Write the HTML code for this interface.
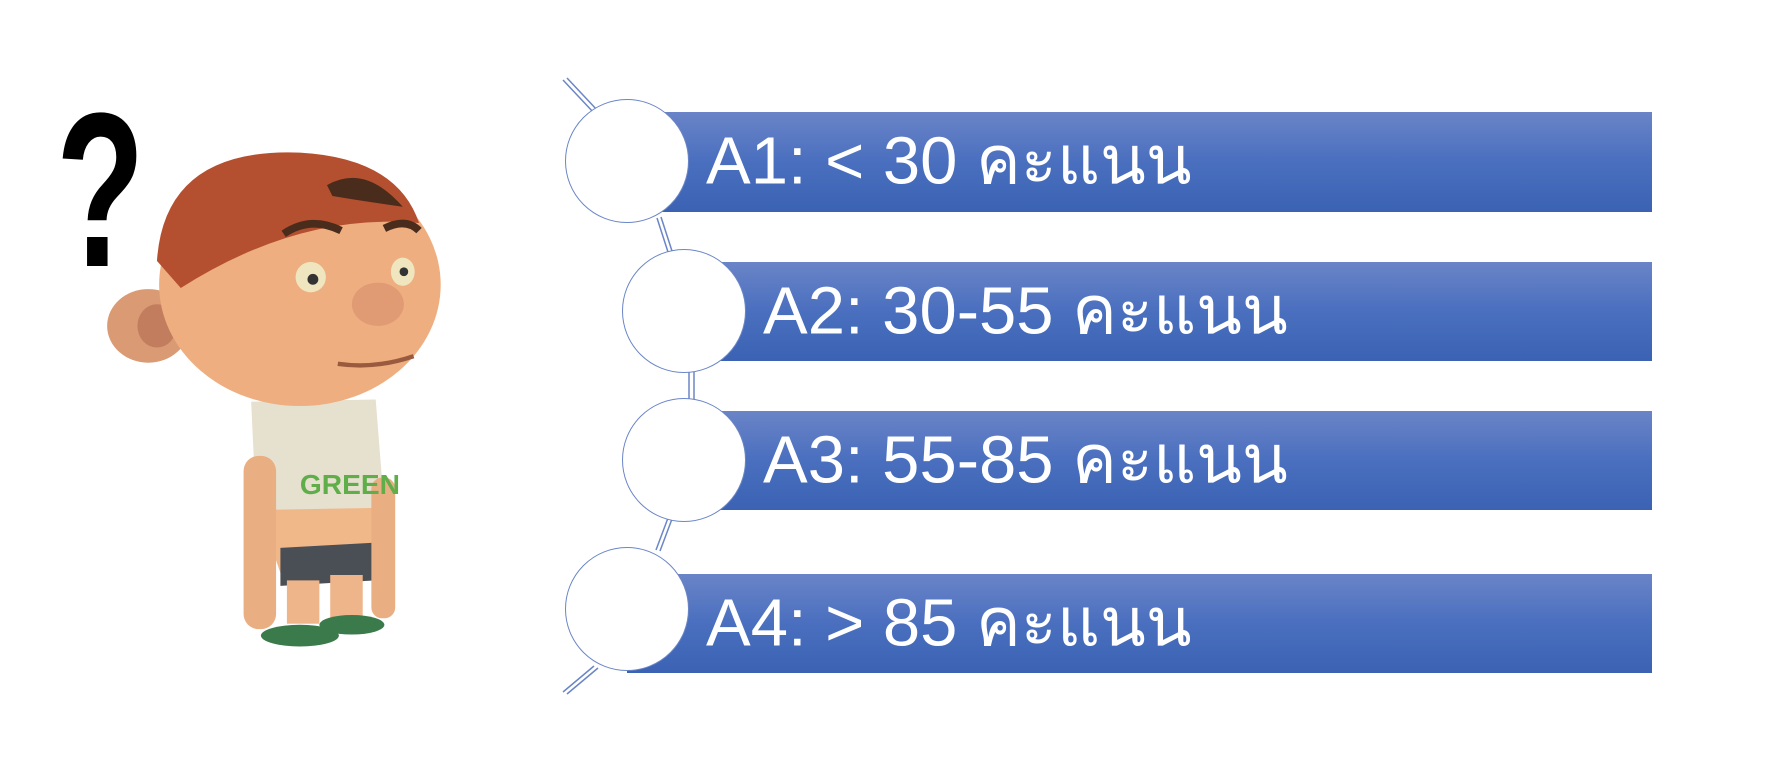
<!DOCTYPE html>
<html><head><meta charset="utf-8"><style>
html,body{margin:0;padding:0;background:#fff;width:1780px;height:762px;overflow:hidden;position:relative;font-family:"Liberation Sans","DejaVu Sans",sans-serif}
.bar{position:absolute;background:linear-gradient(#6a84c7,#4a6fbf 50%,#3b62b3);color:#fff;}
.bar span{position:absolute;top:50%;transform:translateY(-52%);font-size:67px;white-space:nowrap;font-weight:300}
.c{position:absolute;width:124px;height:124px;border-radius:50%;background:#fff;border:1.5px solid #6b86c7;box-sizing:border-box}
</style></head><body>
<svg width="1780" height="762" style="position:absolute;left:0;top:0">
<g stroke="#6b86c7" stroke-width="1.5" fill="none">
<path d="M563 80 L594 113 M567 78 L598 111"/>
<path d="M657 218 L668 252 M661 217 L672 251"/>
<path d="M689 372 L689 400 M694 372 L694 400"/>
<path d="M668 518 L656 550 M672 519 L660 551"/>
<path d="M594 666 L563 692 M598 668 L567 694"/>
</g>
<g transform="translate(-25,1) scale(1.083)">
<ellipse cx="160" cy="300" rx="38" ry="34" fill="#d99a74"/>
<ellipse cx="168" cy="300" rx="18" ry="20" fill="#c27d5f"/>
<path d="M255 370 L370 368 L378 470 L260 478 Z" fill="#e6e0cf"/>
<path d="M262 470 L372 468 L370 528 L282 528 Z" fill="#f0b788"/>
<path d="M282 505 L372 500 L370 535 L282 540 Z" fill="#4a4e55"/>
<rect x="248" y="420" width="30" height="160" rx="14" fill="#e9ae82"/>
<rect x="366" y="440" width="22" height="130" rx="10" fill="#e9ae82"/>
<rect x="288" y="535" width="30" height="40" fill="#eeb58a"/>
<rect x="328" y="530" width="30" height="40" fill="#eeb58a"/>
<ellipse cx="300" cy="586" rx="36" ry="10" fill="#3b7a4a"/>
<ellipse cx="348" cy="576" rx="30" ry="9" fill="#3b7a4a"/>
<text x="300" y="455" font-size="26" font-weight="bold" fill="#5fae4a" font-family="Liberation Sans">GREEN</text>
<ellipse cx="300" cy="262" rx="130" ry="112" fill="#eeae80"/>
<path d="M168 240 Q175 135 300 140 Q390 145 410 205 Q300 195 190 265 Z" fill="#b4502f"/>
<path d="M325 170 Q360 150 395 190 Q360 185 330 180 Z" fill="#4a2c1c"/>
<ellipse cx="310" cy="255" rx="14" ry="14" fill="#efe6c0"/>
<ellipse cx="395" cy="250" rx="11" ry="13" fill="#efe6c0"/>
<circle cx="312" cy="257" r="5" fill="#333"/><circle cx="396" cy="250" r="4" fill="#333"/>
<path d="M285 215 Q310 198 338 212 M378 210 Q398 200 410 212" stroke="#4a2c1c" stroke-width="7" fill="none"/>
<ellipse cx="372" cy="280" rx="24" ry="20" fill="#e09a74"/>
<path d="M335 335 Q370 340 405 328" stroke="#9a5a3e" stroke-width="4" fill="none"/>
</g>
</svg>
<div style="position:absolute;left:56px;top:80px;font-size:220px;font-weight:bold;line-height:1;color:#000;transform:scaleX(0.66);transform-origin:left top">?</div>
<div class="bar" style="left:660px;top:112px;width:992px;height:100px"><span style="left:46px">A1: &lt; 30 คะแนน</span></div>
<div class="bar" style="left:715px;top:262px;width:937px;height:99px"><span style="left:48px">A2: 30-55 คะแนน</span></div>
<div class="bar" style="left:715px;top:411px;width:937px;height:99px"><span style="left:48px">A3: 55-85 คะแนน</span></div>
<div class="bar" style="left:627px;top:574px;width:1025px;height:99px"><span style="left:79px">A4: &gt; 85 คะแนน</span></div>
<div class="c" style="left:565px;top:99px"></div>
<div class="c" style="left:622px;top:249px"></div>
<div class="c" style="left:622px;top:398px"></div>
<div class="c" style="left:565px;top:547px"></div>
</body></html>
